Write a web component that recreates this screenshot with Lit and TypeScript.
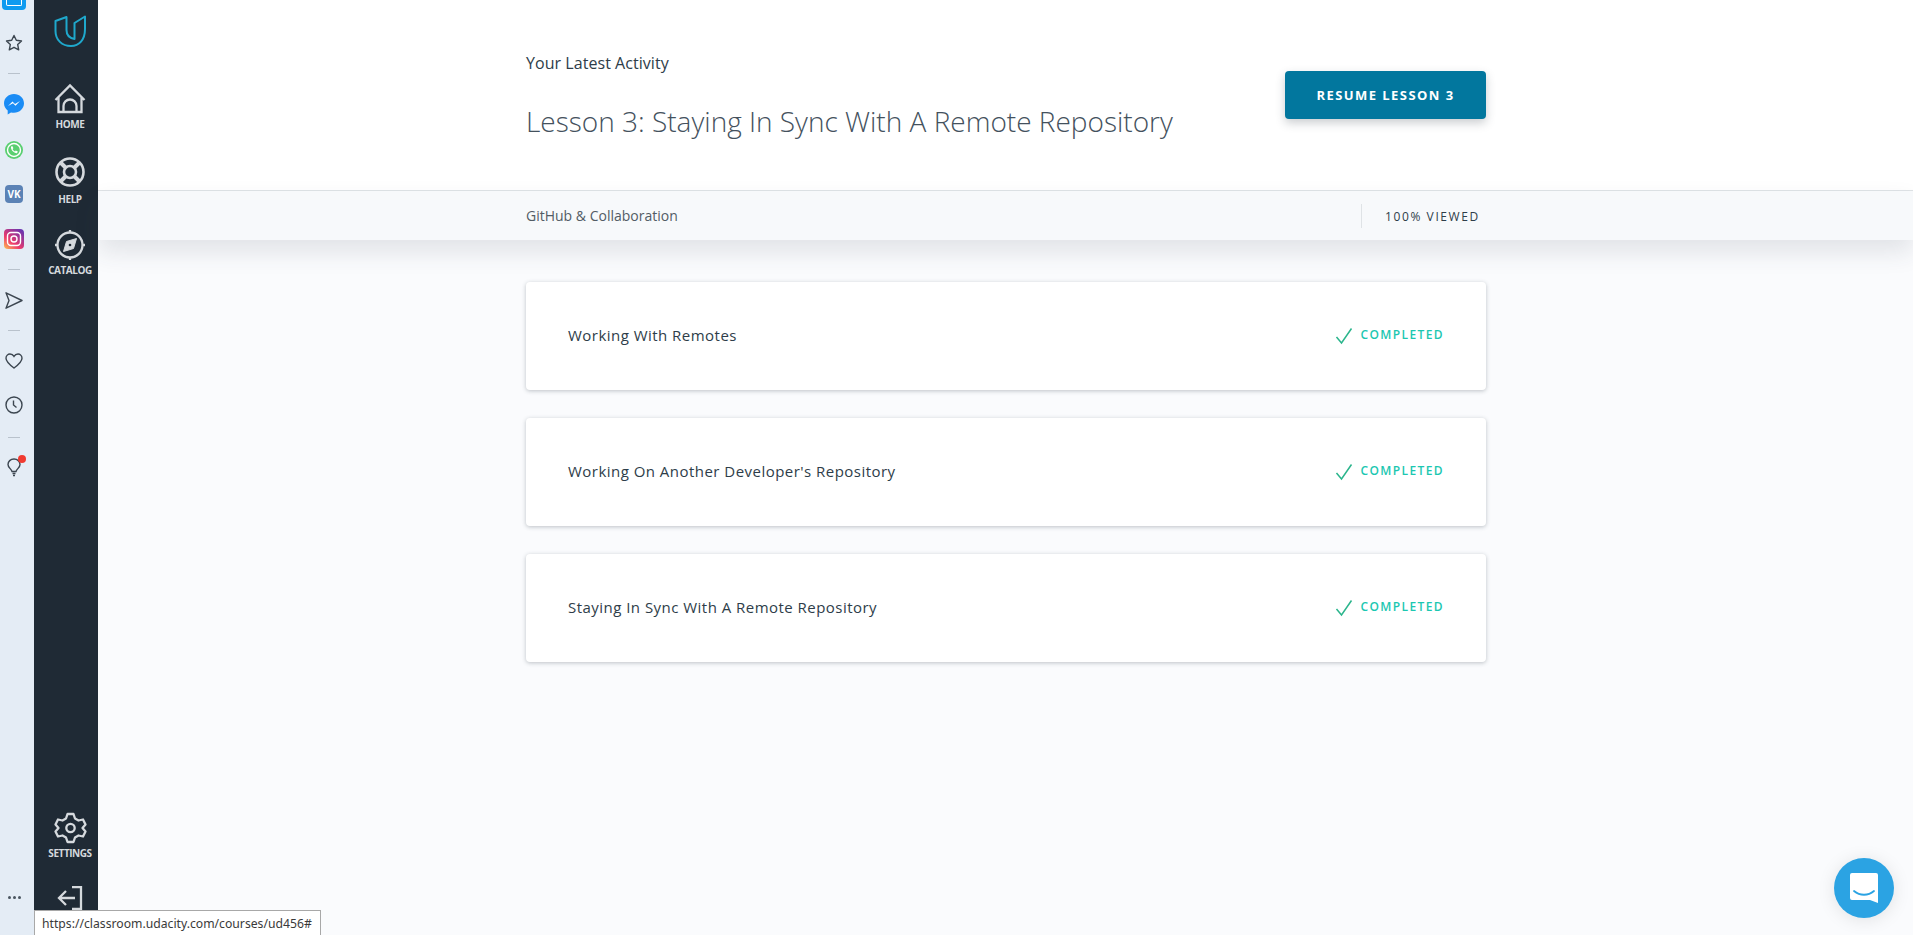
import { LitElement, html, css, svg } from 'lit';
import { customElement } from 'lit/decorators.js';

const lessons = [
  'Working With Remotes',
  "Working On Another Developer's Repository",
  'Staying In Sync With A Remote Repository',
];

// 側邊導覽圖示
const homeIcon = svg`<path d="M0.500 16 L15 1.500 L29.500 16 M3.500 13.500 V28 H26.500 V13.500 M8.500 28 V22 a6.500 6.500 0 0 1 13 0 V28" />`;
const helpIcon = svg`<circle cx="15" cy="15" r="13.500" stroke-width="2.600" /><circle cx="15" cy="15" r="6" stroke-width="2.600" /><path d="M6 6 L10.500 10.500 M24 6 L19.500 10.500 M6 24 L10.500 19.500 M24 24 L19.500 19.500" stroke-width="4" />`;
const catalogIcon = svg`<circle cx="15" cy="15" r="12.500" /><path d="M15 0 V2.500 M15 27.500 V30 M0 15 H2.500 M27.500 15 H30" /><path d="M21.500 8.500 L18.500 18.500 L8.500 21.500 L11.500 11.500 Z" fill="currentColor" stroke-width="1" /><circle cx="15" cy="15" r="1.300" fill="#1f2a35" stroke="none" />`;
const settingsIcon = svg`<path d="M12 1.500 H18 L19.500 6 L23 8 L27.500 7 L30 12 L27 15.500 L30 19 L27.500 24 L23 23 L19.500 25 L18 29.500 H12 L10.500 25 L7 23 L2.500 24 L0 19 L3 15.500 L0 12 L2.500 7 L7 8 L10.500 6 Z" stroke-linejoin="round" transform="translate(0.500 -0.500)" /><circle cx="15.500" cy="15" r="4.200" />`;

@customElement('app-root')
export class AppRoot extends LitElement {
  static styles = css`
    :host {
      display: flex;
      position: relative;
      width: 100%;
      height: 935px;
      overflow: hidden;
      font-family: 'Open Sans', 'Liberation Sans', sans-serif;
      background: #fafbfd;
      color: #2e3d49;
    }

    .strip {
      width: 34px;
      flex: none;
      box-sizing: border-box;
      padding-right: 6px;
      background: #e4ecf5;
      display: flex;
      flex-direction: column;
      align-items: center;
      color: #3c4650;
    }
    .strip svg { display: block; fill: none; stroke: currentColor; stroke-width: 1.4; }
    .strip svg.solid { stroke: none; }
    .strip .top-app {
      width: 24px;
      height: 10px;
      flex: none;
      background: #0f9bf0;
      border-radius: 0 0 4px 4px;
      display: flex;
      justify-content: center;
    }
    .strip .top-app i {
      width: 14px;
      height: 5px;
      border: 1.5px solid #fff;
      border-top: none;
      border-radius: 0 0 2px 2px;
    }
    .strip .sep { width: 12px; height: 1px; background: #b9c2cc; flex: none; }
    .star { margin-top: 24px; }
    .sep-a { margin-top: 21px; }
    .messenger { margin-top: 20px; }
    .whatsapp { margin-top: 26px; }
    .vk { margin-top: 26px; }
    .instagram { margin-top: 26px; }
    .sep-b { margin-top: 20px; }
    .send { margin-top: 22px; }
    .sep-c { margin-top: 21px; }
    .heart { margin-top: 22px; }
    .clock { margin-top: 27px; }
    .sep-d { margin-top: 23px; }
    .badge-wrap { position: relative; margin-top: 20px; }
    .badge {
      position: absolute;
      top: -3px;
      right: -5px;
      width: 8px;
      height: 8px;
      border-radius: 50%;
      background: #f03a30;
    }
    .strip .dots { display: flex; gap: 2px; margin-top: auto; margin-bottom: 36px; }
    .strip .dots i { width: 3px; height: 3px; border-radius: 50%; background: #4a5560; }

    .nav {
      width: 64px;
      flex: none;
      box-sizing: border-box;
      padding-left: 8px;
      background: #1f2a35;
      display: flex;
      flex-direction: column;
      align-items: center;
      color: #d5d9dd;
    }
    .nav .logo { margin-top: 15px; margin-bottom: 37px; flex: none; }
    .nav-item {
      display: flex;
      flex-direction: column;
      align-items: center;
      gap: 3px;
      font-size: 10px;
      font-weight: 700;
      letter-spacing: -0.45px;
      line-height: 14px;
      margin-bottom: 26px;
    }
    .nav-item.help { gap: 5px; margin-bottom: 24px; }
    .nav-item svg { fill: none; stroke: currentColor; stroke-width: 2.3; display: block; overflow: visible; }
    .nav .spacer { flex: 1; }
    .nav .logout { margin-bottom: 25px; fill: none; stroke: currentColor; stroke-width: 2.3; flex: none; }

    .main { flex: 1; min-width: 0; display: flex; flex-direction: column; }

    .header {
      background: #fff;
      height: 191px;
      flex: none;
      box-sizing: border-box;
      border-bottom: 1px solid #dfe3e6;
      display: flex;
      justify-content: center;
    }
    .header-inner, .bar-inner, .cards { width: 960px; margin-left: 1px; }
    .header-inner { display: flex; justify-content: space-between; padding-top: 52px; box-sizing: border-box; }
    .eyebrow { font-size: 16px; font-weight: 500; line-height: 22px; letter-spacing: 0.05px; color: #2e3d49; }
    .title { font-size: 28px; font-weight: 300; line-height: 38px; margin: 28px 0 0; color: #44515d; }
    .resume {
      width: 201px;
      height: 48px;
      margin-top: 19px;
      border: none;
      border-radius: 4px;
      background: #02779e;
      color: #fff;
      font: 700 13px 'Open Sans', sans-serif;
      letter-spacing: 1.45px;
      box-shadow: 0 4px 10px rgba(46, 61, 73, 0.25);
    }

    .bar {
      height: 49px;
      flex: none;
      background: #f7f9fb;
      display: flex;
      justify-content: center;
      box-shadow: 0 12px 24px rgba(46, 61, 73, 0.12);
    }
    .bar-inner { display: flex; justify-content: space-between; align-items: center; }
    .course { font-size: 14px; color: #525c65; }
    .viewed {
      width: 125px;
      height: 24px;
      box-sizing: border-box;
      border-left: 1px solid #dfe3e6;
      padding-left: 23px;
      font-size: 12px;
      line-height: 26px;
      letter-spacing: 1.6px;
      color: #2e3d49;
      white-space: nowrap;
    }

    .content { display: flex; justify-content: center; padding-top: 42px; }
    .cards { display: flex; flex-direction: column; gap: 28px; }
    .card {
      height: 108px;
      box-sizing: border-box;
      background: #fff;
      border-radius: 4px;
      box-shadow: 0 1px 4px rgba(46, 61, 73, 0.3);
      padding: 0 42px 2px 42px;
      display: flex;
      justify-content: space-between;
      align-items: center;
    }
    .card-title { font-size: 15px; font-weight: 500; letter-spacing: 0.47px; color: #2e3d49; }
    .status {
      display: flex;
      align-items: center;
      gap: 7px;
      font-size: 12px;
      font-weight: 600;
      letter-spacing: 1.4px;
      color: #1cc7b1;
      line-height: 16px;
    }
    .status svg { fill: none; stroke: #2bb58c; stroke-width: 1.5; display: block; position: relative; top: 1px; }

    .url-tip {
      position: absolute;
      left: 34px;
      bottom: 0;
      height: 25px;
      width: 287px;
      box-sizing: border-box;
      background: #fff;
      border: 1px solid #a8a8a8;
      border-bottom: none;
      padding: 3px 7px;
      font: 12.2px/20px 'Noto Sans', sans-serif;
      color: #3a3a3a;
      white-space: nowrap;
    }
    .chat {
      position: absolute;
      right: 19px;
      bottom: 17px;
      width: 60px;
      height: 60px;
      border-radius: 50%;
      background: #2ba3e3;
      display: flex;
      align-items: center;
      justify-content: center;
      box-shadow: 0 2px 18px rgba(0, 0, 0, 0.1);
    }
  `;

  private _stripIcons() {
    return html`
      <div class="strip">
        <div class="top-app"><i></i></div>
        <svg class="star" width="18" height="18" viewBox="0 0 18 18"><path d="M9 1.500 L11.300 6.300 L16.500 7 L12.700 10.600 L13.700 15.800 L9 13.300 L4.300 15.800 L5.300 10.600 L1.500 7 L6.700 6.300 Z" stroke-linejoin="round" /></svg>
        <div class="sep sep-a"></div>
        <svg class="messenger solid" width="20" height="21" viewBox="0 0 20 21"><path d="M10 0 C4.500 0 0 4 0 9.300 C0 12.300 1.400 14.800 3.700 16.500 V20.500 L7 18.400 C8 18.700 9 18.800 10 18.800 C15.500 18.800 20 14.600 20 9.300 C20 4 15.500 0 10 0 Z" fill="#1a8cf5" /><path d="M4 12 L8.500 7.500 L11 10 L16 7 L11.500 11.800 L9 9.300 Z" fill="#fff" /></svg>
        <svg class="whatsapp solid" width="18" height="18" viewBox="0 0 18 18"><circle cx="9" cy="9" r="9" fill="#59cf70" /><circle cx="9" cy="9" r="6.500" fill="none" stroke="#fff" stroke-width="1.400" /><path d="M6 5.500 C5.500 8.500 8.500 12 12 12.300 L12.800 10.500 L10.800 9.600 L10 10.400 C9 10 8 9 7.600 8 L8.400 7.200 L7.500 5.200 Z" fill="#fff" /></svg>
        <svg class="vk solid" width="18" height="18" viewBox="0 0 18 18"><rect width="18" height="18" rx="4" fill="#5b82b5" /><text x="9" y="13" font-size="10" font-weight="700" font-family="Open Sans" text-anchor="middle" fill="#fff">VK</text></svg>
        <svg class="instagram solid" width="20" height="20" viewBox="0 0 20 20"><defs><linearGradient id="ig" x1="0" y1="1" x2="0.800" y2="0"><stop offset="0" stop-color="#fdc350" /><stop offset="0.4" stop-color="#ee3a6c" /><stop offset="1" stop-color="#6a35b0" /></linearGradient></defs><rect width="20" height="20" rx="4" fill="url(#ig)" /><rect x="3.500" y="3.500" width="13" height="13" rx="3.500" fill="none" stroke="#fff" stroke-width="1.400" /><circle cx="10" cy="10" r="3" fill="none" stroke="#fff" stroke-width="1.400" /></svg>
        <div class="sep sep-b"></div>
        <svg class="send" width="18" height="17" viewBox="0 0 18 17"><path d="M1 0.800 L17 8.500 L1 16.200 L4 8.500 Z" stroke-linejoin="round" /></svg>
        <div class="sep sep-c"></div>
        <svg class="heart" width="18" height="16" viewBox="0 0 18 16"><path d="M9 15 C5 12 1 9 1 5.200 C1 2.800 3 1 5 1 C6.800 1 8.200 2 9 3.400 C9.800 2 11.200 1 13 1 C15 1 17 2.800 17 5.200 C17 9 13 12 9 15 Z" /></svg>
        <svg class="clock" width="18" height="18" viewBox="0 0 18 18"><circle cx="9" cy="9" r="8" /><path d="M8.500 4.500 V9 L11.500 11.500" /></svg>
        <div class="sep sep-d"></div>
        <div class="badge-wrap">
          <svg width="14" height="19" viewBox="0 0 14 19"><path d="M5 13.500 C4 10.500 1 9.500 1 6.500 C1 3.500 3.500 1 7 1 C10.500 1 13 3.500 13 6.500 C13 9.500 10 10.500 9 13.500 Z M5.500 15.500 H8.500 M6 17.500 H8" /></svg>
          <span class="badge"></span>
        </div>
        <div class="dots"><i></i><i></i><i></i></div>
      </div>
    `;
  }

  private _nav() {
    return html`
      <nav class="nav">
        <svg class="logo" width="32" height="32" viewBox="0 0 32 32" fill="none" stroke="#1fa8cc" stroke-width="2" stroke-linejoin="round">
          <path d="M1.500 6 L12.500 2 V15 C12.500 20 15 23 20.500 24 V8 L31 1.500 V14 C31 25 25 31 17 31 C8 31 1.500 25 1.500 16 Z" />
        </svg>
        <div class="nav-item"><svg width="30" height="30" viewBox="0 0 30 30">${homeIcon}</svg>HOME</div>
        <div class="nav-item help"><svg width="30" height="30" viewBox="0 0 30 30">${helpIcon}</svg>HELP</div>
        <div class="nav-item"><svg width="30" height="30" viewBox="0 0 30 30">${catalogIcon}</svg>CATALOG</div>
        <div class="spacer"></div>
        <div class="nav-item"><svg width="30" height="30" viewBox="0 0 30 30">${settingsIcon}</svg>SETTINGS</div>
        <svg class="logout" width="26" height="24" viewBox="0 0 26 24"><path d="M15 1 H24 V23 H15 M18 12 H2 M9 5 L2 12 L9 19" /></svg>
      </nav>
    `;
  }

  render() {
    return html`
      ${this._stripIcons()}
      ${this._nav()}
      <main class="main">
        <header class="header">
          <div class="header-inner">
            <div>
              <div class="eyebrow">Your Latest Activity</div>
              <h1 class="title">Lesson 3: Staying In Sync With A Remote Repository</h1>
            </div>
            <button class="resume">RESUME LESSON 3</button>
          </div>
        </header>
        <div class="bar">
          <div class="bar-inner">
            <span class="course">GitHub &amp; Collaboration</span>
            <span class="viewed">100% VIEWED</span>
          </div>
        </div>
        <div class="content">
          <div class="cards">
            ${lessons.map(
              (name) => html`
                <div class="card">
                  <span class="card-title">${name}</span>
                  <span class="status">
                    <svg width="18" height="18" viewBox="0 0 18 18"><path d="M1.500 10 L6.500 16 L16.500 1.500" /></svg>
                    COMPLETED
                  </span>
                </div>
              `
            )}
          </div>
        </div>
      </main>
      <div class="url-tip">https://classroom.udacity.com/courses/ud456#</div>
      <div class="chat">
        <svg width="30" height="34" viewBox="0 0 30 34">
          <path d="M3 2 H27 a2 2 0 0 1 2 2 V32 L21 29 H3 a2 2 0 0 1 -2 -2 V4 a2 2 0 0 1 2 -2 Z" fill="#fff" />
          <path d="M5 20 C11 25 19 25 25 20" fill="none" stroke="#2ba3e3" stroke-width="1.800" stroke-linecap="round" />
        </svg>
      </div>
    `;
  }
}
